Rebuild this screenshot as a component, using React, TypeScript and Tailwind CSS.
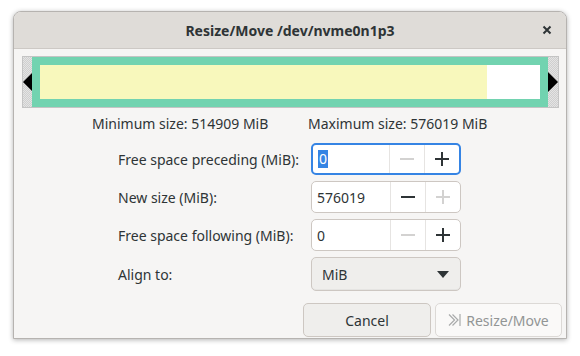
const font = "font-['Noto_Sans',sans-serif]";

function Minus({ off }: { off?: boolean }) {
  return (
    <svg width="16" height="16" viewBox="0 0 16 16">
      <path d="M1 8h14" stroke={off ? "#d3d2d1" : "#2e3436"} strokeWidth="2" />
    </svg>
  );
}

function Plus({ off }: { off?: boolean }) {
  return (
    <svg width="16" height="16" viewBox="0 0 16 16">
      <path d="M1 8h14M8 1v14" stroke={off ? "#d3d2d1" : "#2e3436"} strokeWidth="2" />
    </svg>
  );
}

function Spin({
  value,
  focus,
  minusOff,
  plusOff,
}: {
  value: string;
  focus?: boolean;
  minusOff?: boolean;
  plusOff?: boolean;
}) {
  return (
    <div
      className={
        "flex h-[32px] w-[150px] rounded-[5px] bg-white " +
        (focus ? "border-2 border-[#3584e4]" : "border border-[#cdc7c2]")
      }
    >
      <div className="flex flex-1 items-center pl-[5px]">
        {focus ? (
          <span className="bg-[#3584e4] px-[1px] leading-[18px] text-white">{value}</span>
        ) : (
          <span>{value}</span>
        )}
      </div>
      <div className="flex w-[35px] items-center justify-center border-l border-[#e6e4e2]">
        <Minus off={minusOff} />
      </div>
      <div className="flex w-[35px] items-center justify-center border-l border-[#e6e4e2]">
        <Plus off={plusOff} />
      </div>
    </div>
  );
}

export default function App() {
  return (
    <div className={`h-[356px] w-[580px] bg-white pl-[13px] pt-[11px] text-[14px] text-[#2e3436] ${font}`}>
      <div className="flex h-[328px] w-[554px] flex-col overflow-hidden rounded-t-[8px] border border-[#b6b3b0] bg-[#f6f5f4] shadow-[0_1px_5px_rgba(0,0,0,0.3)]">
        {/* title bar */}
        <div className="relative flex h-[37px] shrink-0 items-center justify-center border-b border-[#cdc9c5] bg-[#dfdcd8]">
          <span className="font-bold">Resize/Move /dev/nvme0n1p3</span>
          <svg className="absolute right-[14px] top-[13px]" width="10" height="10" viewBox="0 0 10 10">
            <path d="M1.5 1.5l7 7M8.5 1.5l-7 7" stroke="#2e3436" strokeWidth="2" />
          </svg>
        </div>

        <div className="flex flex-1 flex-col px-[8px] pt-[7px]">
          {/* partition graphic */}
          <div className="flex h-[52px] w-[537px] border border-[#c4c4c4] bg-[repeating-conic-gradient(#cfcfcf_0_25%,#e4e4e4_0_50%)] bg-[length:2px_2px]">
            <div className="flex w-[9px] items-center">
              <svg width="10" height="20" viewBox="0 0 10 20">
                <path d="M0 10L10 0v20z" fill="#000" />
              </svg>
            </div>
            <div className="flex flex-1 bg-[#72d3b0] p-[8px]">
              <div className="w-[447px] bg-[#f8f8bc]" />
              <div className="flex-1 bg-white" />
            </div>
            <div className="flex w-[10px] items-center">
              <svg width="10" height="20" viewBox="0 0 10 20">
                <path d="M10 10L0 0v20z" fill="#000" />
              </svg>
            </div>
          </div>

          {/* min / max */}
          <div className="mt-[5px] flex h-[20px] items-center">
            <span className="ml-[70px] w-[216px]">Minimum size: 514909 MiB</span>
            <span>Maximum size: 576019 MiB</span>
          </div>

          {/* form */}
          <div className="ml-[96px] mt-[10px] grid grid-cols-[193px_150px] items-center gap-y-[6px]">
            <span>Free space preceding (MiB):</span>
            <Spin value="0" focus minusOff />
            <span>New size (MiB):</span>
            <Spin value="576019" plusOff />
            <span>Free space following (MiB):</span>
            <Spin value="0" minusOff />
            <span>Align to:</span>
            <div className="flex h-[34px] items-center justify-between rounded-[5px] border border-[#cdc7c2] bg-[#efeeec] pl-[10px] pr-[11px] shadow-[inset_0_-1px_0_rgba(0,0,0,0.04)]">
              <span>MiB</span>
              <svg width="12" height="7" viewBox="0 0 12 7">
                <path d="M0 0h12L6 7z" fill="#2e3436" />
              </svg>
            </div>
          </div>

          {/* buttons */}
          <div className="mt-[12px] flex justify-end gap-[4px]">
            <div className="flex h-[34px] w-[128px] items-center justify-center rounded-[5px] border border-[#cdc7c2] bg-[#efeeec]">
              Cancel
            </div>
            <div className="-mr-[4px] flex h-[34px] w-[127px] items-center justify-center gap-[4px] rounded-[5px] border border-[#dcd9d6] bg-[#faf9f8] text-[#929595]">
              <svg width="14" height="16" viewBox="0 0 14 16">
                <path
                  d="M1 2.5l5.5 5.5L1 13.5M4.5 2.5l5.5 5.5-5.5 5.5M12 2v12"
                  fill="none"
                  stroke="#a9abab"
                  strokeWidth="1.2"
                />
              </svg>
              <span>Resize/Move</span>
            </div>
          </div>
        </div>
      </div>
    </div>
  );
}
